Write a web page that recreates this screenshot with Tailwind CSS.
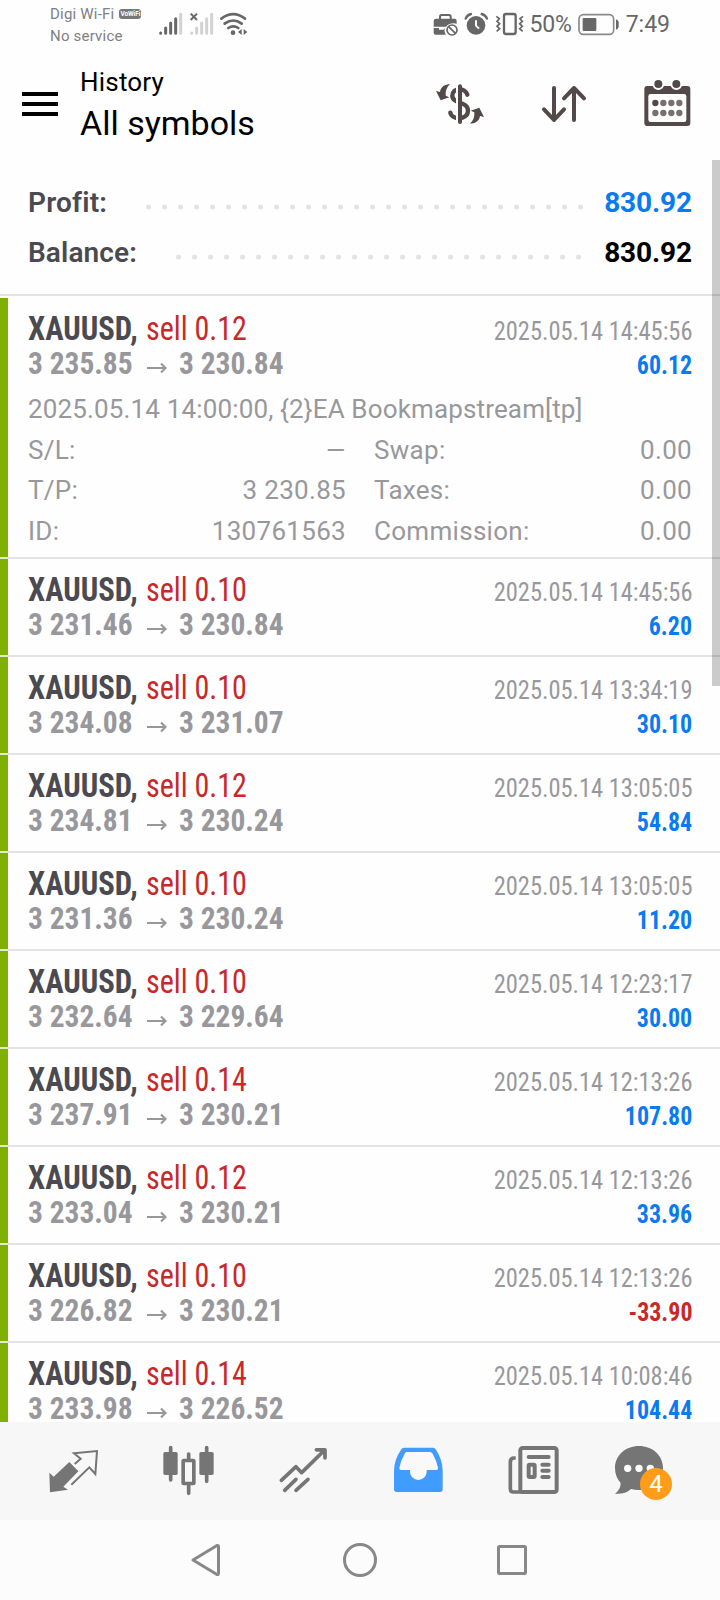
<!DOCTYPE html>
<html lang="en">
<head>
    <meta charset="UTF-8">
    <meta name="viewport" content="width=device-width, initial-scale=1.0">
    <title>History - All symbols</title>
    <script src="https://cdn.jsdelivr.net/npm/@tailwindcss/browser@4"></script>
</head>
<body class="w-[720px] h-[1600px] overflow-hidden bg-[#fefefe] font-['Roboto','Liberation_Sans',sans-serif] flex flex-col">

    <!-- Status bar -->
    <div class="h-12 shrink-0 flex text-[#676767]">
        <div class="ml-[50px] pt-[3px] w-[109px] text-[15px] leading-[22px] tracking-[0.2px] whitespace-nowrap text-[#808080]">
            <div class="flex items-center">Digi Wi-Fi
                <span class="ml-[5px] w-[22px] h-[10px] rounded-[3px] bg-[#777] text-white text-[6.5px] leading-[10px] font-bold tracking-[-0.1px] text-center">VoWiFi</span>
            </div>
            <div>No service</div>
        </div>
        <svg class="w-[90px] h-12" viewBox="477 0 270 144" fill="#676767">
            <g stroke-width="9" stroke-linecap="round" stroke="#676767">
                <path d="M482 99v1M497 84v16M512 69v31M527 56v44"/>
                <path stroke="#d2d2d2" d="M542 43v57M575 99v1M590 84v16M605 69v31M620 56v44M635 43v57"/>
                <path stroke-width="6" stroke-linecap="butt" d="M572 41l19 19M591 41l-19 19"/>
            </g>
            <g fill="none" stroke="#676767" stroke-width="8" stroke-linecap="round">
                <path d="M664 56q36 -27 71 0M674 71q26 -19 51 0M685 84q15 -10 30 0"/>
            </g>
            <circle cx="699" cy="98" r="7"/>
            <path d="M714 96l11 -9v18zM742 96l-11 -9v18z"/>
        </svg>
        <div class="ml-auto mr-[50px] flex items-center text-[23px]">
            <svg class="w-[97px] h-12" viewBox="40 0 291 144" fill="#676767">
                <path d="M58 58v-8q0 -8 8 -8h22q8 0 8 8v8h-6v-7q0 -3 -3 -3h-20q-3 0 -3 3v7z"/>
                <path d="M49 56h56q6 0 6 7v8q-20 -4 -32 9h-37v-17q0 -7 7 -7zM42 84h16v5h14l4 -4q-4 10 3 19h-31q-6 0 -6 -6z"/>
                <g fill="none" stroke="#676767" stroke-width="5"><circle cx="97" cy="90" r="15"/><path d="M87 80l21 21"/></g>
                <circle cx="169" cy="76" r="28"/>
                <path d="M138 56q4 -11 16 -14M202 56q-4 -11 -16 -14" fill="none" stroke="#676767" stroke-width="7" stroke-linecap="round"/>
                <path d="M169 61v16l9 9" fill="none" stroke="#fff" stroke-width="6"/>
                <rect x="253" y="42" width="35" height="60" rx="6" fill="none" stroke="#676767" stroke-width="7"/>
                <path d="M230 49l9 7l-7 8l8 7l-8 8l8 7l-9 8M310 49l-9 7l7 8l-8 7l8 8l-8 7l9 8" fill="none" stroke="#676767" stroke-width="5"/>
            </svg>
            <span class="pt-[3px] tracking-[-0.2px]">50%</span>
            <svg class="ml-[6px] w-[42px] h-12" viewBox="472 0 126 144">
                <rect x="475" y="44" width="104" height="59" rx="13" fill="none" stroke="#8a8a8a" stroke-width="5"/>
                <rect x="486" y="54" width="41" height="39" rx="4" fill="#676767"/>
                <path d="M586 58q8 3 8 9v13q0 6 -8 9z" fill="#676767"/>
            </svg>
            <span class="pt-[3px] ml-[6px]">7:49</span>
        </div>
    </div>

    <!-- App header -->
    <header class="h-28 shrink-0 flex items-center pl-[22px] pr-[23px]">
        <div class="w-9 flex flex-col gap-[6px]">
            <div class="h-1 bg-black"></div>
            <div class="h-1 bg-black"></div>
            <div class="h-1 bg-black"></div>
        </div>
        <div class="ml-[22px] text-black self-start pt-[16px]">
            <div class="text-[26px] leading-[36px] tracking-[0.2px]">History</div>
            <div class="pt-px text-[34px] leading-[44px]">All symbols</div>
        </div>
        <div class="ml-auto flex gap-11">
            <svg class="size-[60px]" viewBox="27 222 180 180" fill="#54494a">
                <path d="M142 284C136 262 97 262 97 287C97 314 145 302 144 333C142 362 95 360 91 338" fill="none" stroke="#54494a" stroke-width="13" stroke-linecap="round"/>
                <path d="M111 250v124" stroke="#fff" stroke-width="6"/>
                <path d="M120 259v107" stroke="#54494a" stroke-width="12" stroke-linecap="round"/>
                <path id="swing" d="M90 253C76 253 62 260 60 276L48 273L62 301L88 292L77 287C76 272 80 262 90 253Z"/>
                <use href="#swing" transform="rotate(180 120 312)"/>
            </svg>
            <svg class="size-[60px]" viewBox="339 222 180 180" fill="none" stroke="#54494a" stroke-width="12" stroke-linecap="round" stroke-linejoin="round">
                <path d="M402 264v96M372 328l30 32l30 -32M462 360v-96M432 295l30 -31l30 31"/>
            </svg>
            <svg class="size-[60px]" viewBox="650 222 180 180" fill="#54494a">
                <rect x="672" y="258" width="138" height="120" rx="9"/>
                <rect x="684" y="282" width="114" height="84" rx="7" fill="#fff"/>
                <g stroke="#fff" stroke-width="6"><circle cx="714" cy="252" r="15"/><circle cx="768" cy="252" r="15"/></g>
                <circle cx="705" cy="309" r="9.500"/>
                <g fill="#786f6e">
                    <circle cx="729" cy="309" r="9.500"/><circle cx="753" cy="309" r="9.500"/><circle cx="777" cy="309" r="9.500"/>
                    <circle cx="705" cy="339" r="9.500"/><circle cx="729" cy="339" r="9.500"/><circle cx="753" cy="339" r="9.500"/><circle cx="777" cy="339" r="9.500"/>
                </g>
            </svg>
        </div>
    </header>

    <!-- Scrollable history -->
    <main class="relative h-[1262px] shrink-0 overflow-hidden">
        <div class="h-[136px] pt-[18px] px-7 border-b-2 border-[#e3e3e3] text-[28px] leading-[50px] font-bold text-[#4b4a50]">
            <div class="flex items-center">
                <span class="w-[118px] font-semibold tracking-[0.2px]">Profit:</span>
                <svg class="mt-[8px] w-[440px] h-[6px]" viewBox="0 0 440 6"><path d="M2.500 3H435" stroke="#e3e3e3" stroke-width="5" stroke-linecap="round" stroke-dasharray="0 16"/></svg>
                <span class="ml-auto text-[#0a7af0] tracking-[-0.1px]">830.92</span>
            </div>
            <div class="flex items-center">
                <span class="w-[148px] font-semibold tracking-[0.1px]">Balance:</span>
                <svg class="mt-[8px] w-[410px] h-[6px]" viewBox="0 0 410 6"><path d="M2.500 3H403" stroke="#e3e3e3" stroke-width="5" stroke-linecap="round" stroke-dasharray="0 16"/></svg>
                <span class="ml-auto text-black tracking-[-0.1px]">830.92</span>
            </div>
        </div>
        <div id="deals" class="mt-[2px]"></div>
        <!-- Scrollbar thumb -->
        <div class="absolute right-0 top-0 w-2 h-[526px] bg-black/20"></div>
    </main>

    <!-- Tab bar -->
    <nav class="h-[98px] shrink-0 bg-[#f7f7f7] px-[15px] flex">
        <svg class="w-[115px] h-[98px]" viewBox="45 246 345 294" fill="#757575">
            <path d="M148 398L161 410L208 366L235 394L190 440L204 449L150 457Z"/>
            <path d="M224 372L242 356L222 340L291 333L286 402L268 382L214 434" fill="none" stroke="#757575" stroke-width="6"/>
        </svg>
        <svg class="w-[115px] h-[98px]" viewBox="390 246 345 294" fill="#757575">
            <path d="M512 323v97M620 323v101M566 342v14M566 434v26" stroke="#757575" stroke-width="11" stroke-linecap="round"/>
            <rect x="490" y="336" width="43" height="69" rx="5"/>
            <rect x="598" y="336" width="43" height="69" rx="5"/>
            <rect x="549.500" y="361.500" width="32" height="69" rx="2" fill="none" stroke="#757575" stroke-width="11"/>
        </svg>
        <svg class="w-[115px] h-[98px]" viewBox="15 66 345 294" fill="none" stroke="#757575" stroke-width="11" stroke-linecap="round" stroke-linejoin="round">
            <path d="M124 241L168 200L185 218L254 150M229 149.500H255V174M134 271L168 238M168 271L204 238"/>
        </svg>
        <svg class="w-[115px] h-[98px]" viewBox="360 66 345 294">
            <path d="M492 143H579Q585 143 588 149Q608 180 608 212V268Q608 276 600 276H470Q462 276 462 268V212Q462 180 483 149Q486 143 492 143Z" fill="#409cff"/>
            <path d="M501 156H570Q575 156 578 161Q590 182 594 203Q595 210 589 210H560V215A25 25 0 0 1 510 215V210H483Q477 210 478 203Q482 182 494 161Q496 156 501 156Z" fill="#f9f9f9"/>
        </svg>
        <svg class="w-[115px] h-[98px]" viewBox="-15 246 345 294" fill="none" stroke="#757575" stroke-width="12">
            <rect x="121" y="324" width="109" height="132" rx="7"/>
            <path d="M107 354H103Q91 354 91 366V446Q91 456 101 456H125" stroke-width="11"/>
            <path d="M146 351H206M187 374H206M187 392.500H206M187 411H206" stroke-linecap="round"/>
            <rect x="146" y="374" width="18" height="37" rx="3"/>
        </svg>
        <div class="relative w-[115px] h-[98px]">
            <svg class="w-[115px] h-[98px]" viewBox="330 246 345 294" fill="#757575">
                <path d="M477 318C517 318 549 346 549 384C549 423 517 450 477 450C468 450 460 449 453 447C440 459 424 463 405 461C416 453 422 443 422 429C411 417 405 402 405 384C405 346 437 318 477 318Z"/>
                <g fill="#fff"><circle cx="443" cy="385" r="11"/><circle cx="477" cy="385" r="11"/><circle cx="511" cy="385" r="11"/></g>
            </svg>
            <div class="absolute left-[50px] top-[46px] size-8 rounded-full bg-[#ff9d1b] text-white text-[24px] leading-8 text-center">4</div>
        </div>
    </nav>

    <!-- System navigation -->
    <div class="h-20 shrink-0 bg-[#fcfcfc] flex justify-center">
        <svg class="w-[400px] h-20" viewBox="160 0 400 80" fill="none" stroke="#888" stroke-width="3" stroke-linejoin="round">
            <path d="M193 40L217 25.500Q218.500 25 218.500 27V53Q218.500 55 217 54.500Z"/>
            <circle cx="360" cy="40" r="15.500"/>
            <rect x="498.500" y="26.500" width="27" height="27" rx="1"/>
        </svg>
    </div>

    <script>
        const deals = [
            { volume: '0.12', from: '3 235.85', to: '3 230.84', time: '14:45:56', profit: '60.12', open: true },
            { volume: '0.10', from: '3 231.46', to: '3 230.84', time: '14:45:56', profit: '6.20' },
            { volume: '0.10', from: '3 234.08', to: '3 231.07', time: '13:34:19', profit: '30.10' },
            { volume: '0.12', from: '3 234.81', to: '3 230.24', time: '13:05:05', profit: '54.84' },
            { volume: '0.10', from: '3 231.36', to: '3 230.24', time: '13:05:05', profit: '11.20' },
            { volume: '0.10', from: '3 232.64', to: '3 229.64', time: '12:23:17', profit: '30.00' },
            { volume: '0.14', from: '3 237.91', to: '3 230.21', time: '12:13:26', profit: '107.80' },
            { volume: '0.12', from: '3 233.04', to: '3 230.21', time: '12:13:26', profit: '33.96' },
            { volume: '0.10', from: '3 226.82', to: '3 230.21', time: '12:13:26', profit: '-33.90' },
            { volume: '0.14', from: '3 233.98', to: '3 226.52', time: '10:08:46', profit: '104.44' }
        ];

        // Extra block shown under an expanded deal
        const details = `
            <div class="pt-[9px] text-[26px] leading-[40.5px] tracking-[0.3px] text-[#98989c]">
                <div class="tracking-[0.15px]">2025.05.14 14:00:00, {2}EA Bookmapstream[tp]</div>
                <div class="grid grid-cols-2 gap-x-7">
                    <div class="flex justify-between"><span>S/L:</span><span class="origin-right scale-x-95">—</span></div>
                    <div class="flex justify-between"><span>Swap:</span><span>0.00</span></div>
                    <div class="flex justify-between"><span>T/P:</span><span>3 230.85</span></div>
                    <div class="flex justify-between"><span>Taxes:</span><span>0.00</span></div>
                    <div class="flex justify-between"><span>ID:</span><span>130761563</span></div>
                    <div class="flex justify-between"><span>Commission:</span><span>0.00</span></div>
                </div>
            </div>`;

        document.getElementById('deals').innerHTML = deals.map(d => `
            <div class="${d.open ? 'h-[261px]' : 'h-[98px]'} flex">
                <div class="w-2 bg-[#7fb000] border-b-2 border-[#e0ebc2]"></div>
                <div class="flex-1 pt-[14px] pl-5 pr-7 border-b-2 border-[#e3e3e3]">
                    <div class="flex items-baseline h-[34px] leading-[34px] whitespace-nowrap font-['Roboto_Condensed','Roboto',sans-serif] font-stretch-75%">
                        <div class="w-[118px] text-[33px] font-bold text-[#4b4a50] origin-left scale-x-93">XAUUSD,</div>
                        <div class="text-[33px] text-[#c82828] origin-left scale-x-91">sell ${d.volume}</div>
                        <div class="ml-auto -mr-px text-[26px] leading-[26px] text-[#98989c] origin-right scale-x-94">2025.05.14 ${d.time}</div>
                    </div>
                    <div class="flex items-baseline h-[34px] leading-[34px] whitespace-nowrap font-['Roboto_Condensed','Roboto',sans-serif] font-stretch-75% font-bold">
                        <div class="w-[119px] text-[32px] text-[#98989c] origin-left scale-x-92">${d.from}</div>
                        <svg class="self-start mt-[15px] w-5 h-[14px]" viewBox="0 0 20 14" fill="none" stroke="#98989c" stroke-width="2.200"><path d="M0 7H18.500M14 2.500L18.500 7L14 11.500"/></svg>
                        <div class="ml-[12px] text-[32px] text-[#98989c] origin-left scale-x-92">${d.to}</div>
                        <div class="ml-auto text-[26px] leading-[26px] origin-right scale-x-92 ${d.profit.startsWith('-') ? 'text-[#c82828]' : 'text-[#0a7af0]'}">${d.profit}</div>
                    </div>
                    ${d.open ? details : ''}
                </div>
            </div>`).join('');
    </script>
</body>
</html>
